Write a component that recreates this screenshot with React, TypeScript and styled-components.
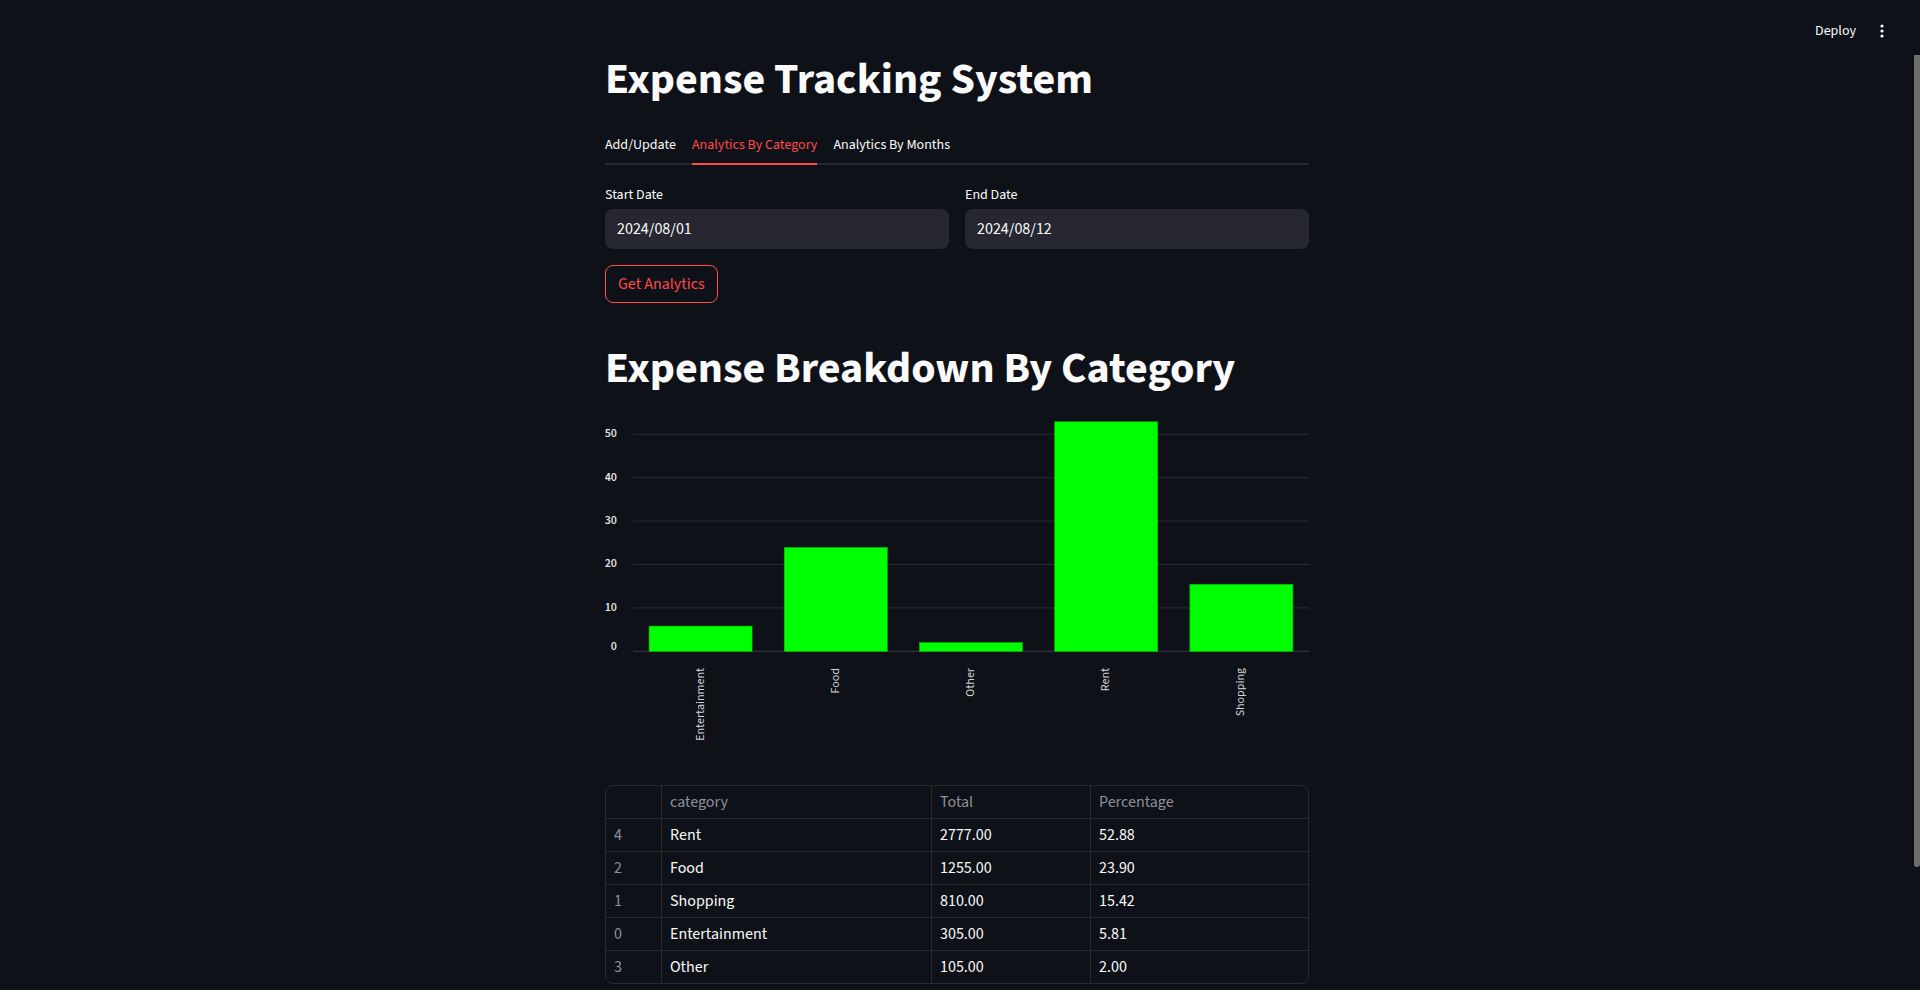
import styled, { createGlobalStyle } from "styled-components";

const GlobalStyle = createGlobalStyle`
    html, body {
        margin: 0;
        padding: 0;
        background: #0e1117;
        color: #fafafa;
        font-family: "Source Sans Pro", "Source Sans 3", Lato, "Liberation Sans", sans-serif;
        overflow: hidden;
    }
    * {
        box-sizing: border-box;
    }
`

const categories = [
    { name: 'Entertainment', value: 5.81 },
    { name: 'Food', value: 23.90 },
    { name: 'Other', value: 2.00 },
    { name: 'Rent', value: 52.88 },
    { name: 'Shopping', value: 15.42 },
];

const tableRows = [
    { index: 4, category: 'Rent', total: '2777.00', pct: '52.88' },
    { index: 2, category: 'Food', total: '1255.00', pct: '23.90' },
    { index: 1, category: 'Shopping', total: '810.00', pct: '15.42' },
    { index: 0, category: 'Entertainment', total: '305.00', pct: '5.81' },
    { index: 3, category: 'Other', total: '105.00', pct: '2.00' },
];

const AppShell = styled.div`
    display: flex;
    height: 100vh;
    width: 100vw;
`

const Main = styled.main`
    position: relative;
    flex: 1;
    overflow: hidden;
`

const ScrollTrack = styled.div`
    width: 6px;
    height: 100%;
`

const ScrollThumb = styled.div`
    margin-top: 55px;
    height: 812px;
    background: #6d6d6d;
    border-radius: 0 0 3px 3px;
`

const Header = styled.header`
    position: absolute;
    top: 0;
    left: 0;
    right: 0;
    height: 62px;
    display: flex;
    align-items: center;
    justify-content: flex-end;
    padding-right: 12px;
`

const DeployButton = styled.button`
    background: transparent;
    border: none;
    color: #fafafa;
    font-family: inherit;
    font-size: 14px;
    padding: 0 6px;
    height: 32px;
    cursor: pointer;
`

const MenuButton = styled.button`
    background: transparent;
    border: none;
    width: 40px;
    height: 32px;
    display: flex;
    align-items: center;
    justify-content: center;
    padding: 0;
    cursor: pointer;
`

const Content = styled.div`
    width: 704px;
    margin: 0 auto;
    padding-top: 54px;
    display: flex;
    flex-direction: column;
`

const Heading = styled.h1<{ $top?: number }>`
    margin: ${({ $top }) => $top ?? 0}px 0 0;
    font-size: 44px;
    font-weight: 700;
    line-height: 1.2;
    color: #fafafa;
`

const TabList = styled.div`
    margin-top: 16px;
    display: flex;
    gap: 16px;
    border-bottom: 2px solid #262730;
`

const Tab = styled.button<{ $active?: boolean }>`
    height: 42px;
    margin-bottom: -2px;
    padding: 4px 0 0;
    background: transparent;
    border: none;
    border-bottom: 2px solid ${({ $active }) => $active ? '#ff4b4b' : 'transparent'};
    color: ${({ $active }) => $active ? '#ff4b4b' : '#fafafa'};
    font-family: inherit;
    font-size: 14px;
    display: flex;
    align-items: center;
    cursor: pointer;
`

const DateRow = styled.div`
    margin-top: 17px;
    display: grid;
    grid-template-columns: 1fr 1fr;
    gap: 16px;
`

const Field = styled.div`
    display: flex;
    flex-direction: column;
    gap: 1px;
`

const FieldLabel = styled.label`
    font-size: 14px;
    line-height: 26px;
    color: #fafafa;
`

const DateInput = styled.div`
    height: 40px;
    border-radius: 8px;
    background: #262730;
    padding: 0 12px;
    display: flex;
    align-items: center;
    font-size: 16px;
    color: #fafafa;
`

const ActionButton = styled.button`
    align-self: flex-start;
    margin-top: 16px;
    height: 38px;
    padding: 0 12px;
    border: 1px solid #ff4b4b;
    border-radius: 8px;
    background: transparent;
    color: #ff4b4b;
    font-family: inherit;
    font-size: 16px;
    cursor: pointer;
`

const ChartBox = styled.div`
    margin-top: 14px;
    height: 350px;
`

const Table = styled.div`
    margin-top: 25px;
    border: 1px solid #272a31;
    border-radius: 8px;
    overflow: hidden;
`

const Row = styled.div`
    display: grid;
    grid-template-columns: 56px 270px 159px 1fr;
    height: 33px;
    border-bottom: 1px solid #272a31;

    &:last-child {
        height: 32px;
        border-bottom: none;
    }
`

const Cell = styled.div<{ $muted?: boolean }>`
    display: flex;
    align-items: center;
    padding-left: 8px;
    border-right: 1px solid #272a31;
    font-size: 16px;
    color: ${({ $muted }) => $muted ? '#8e9097' : '#fafafa'};

    &:last-child {
        border-right: none;
    }
`

const KebabIcon = () => (
    <svg width="4" height="14" viewBox="0 0 4 14">
        <circle cx="2" cy="2" r="1.6" fill="#fafafa" />
        <circle cx="2" cy="7" r="1.6" fill="#fafafa" />
        <circle cx="2" cy="12" r="1.6" fill="#fafafa" />
    </svg>
)

// plot geometry inside the chart svg
const PLOT_LEFT = 28;
const PLOT_RIGHT = 704;
const ZERO_Y = 241.3;
const PX_PER_UNIT = 4.34;
const BAR_WIDTH = 103;

const BarChart = () => {
    const band = (PLOT_RIGHT - PLOT_LEFT) / categories.length;
    const ticks = [0, 10, 20, 30, 40, 50];
    return <svg width="704" height="350" viewBox="0 0 704 350">
        {ticks.map(t => {
            const y = ZERO_Y - t * PX_PER_UNIT;
            return <g key={t}>
                <line x1={PLOT_LEFT} x2={PLOT_RIGHT} y1={y} y2={y} stroke={t === 0 ? '#3a3d46' : '#2b2e36'} strokeWidth="1" />
                <text
                    x="12"
                    y={t === 0 ? y - 1.5 : y}
                    textAnchor="end"
                    dominantBaseline={t === 0 ? 'alphabetic' : 'middle'}
                    fill="#e2e3e6"
                    fontSize="12"
                    fontWeight="600"
                >{t}</text>
            </g>
        })}
        {categories.map((c, i) => {
            const cx = PLOT_LEFT + band * i + band / 2;
            const h = c.value * PX_PER_UNIT;
            return <g key={c.name}>
                <rect x={cx - BAR_WIDTH / 2} y={ZERO_Y - h} width={BAR_WIDTH} height={h} fill="#00ff00" stroke="#00c400" strokeWidth="0.6" />
                <text
                    transform={`translate(${cx}, 258) rotate(-90)`}
                    textAnchor="end"
                    dominantBaseline="middle"
                    fill="#d4d5d9"
                    fontSize="12"
                >{c.name}</text>
            </g>
        })}
    </svg>
}

const App = () => {
    return <>
        <GlobalStyle />
        <AppShell>
            <Main>
                <Header>
                    <DeployButton>Deploy</DeployButton>
                    <MenuButton><KebabIcon /></MenuButton>
                </Header>
                <Content>
                    <Heading>Expense Tracking System</Heading>
                    <TabList>
                        <Tab>Add/Update</Tab>
                        <Tab $active>Analytics By Category</Tab>
                        <Tab>Analytics By Months</Tab>
                    </TabList>
                    <DateRow>
                        <Field>
                            <FieldLabel>Start Date</FieldLabel>
                            <DateInput>2024/08/01</DateInput>
                        </Field>
                        <Field>
                            <FieldLabel>End Date</FieldLabel>
                            <DateInput>2024/08/12</DateInput>
                        </Field>
                    </DateRow>
                    <ActionButton>Get Analytics</ActionButton>
                    <Heading $top={40}>Expense Breakdown By Category</Heading>
                    <ChartBox>
                        <BarChart />
                    </ChartBox>
                    <Table>
                        <Row>
                            <Cell $muted></Cell>
                            <Cell $muted>category</Cell>
                            <Cell $muted>Total</Cell>
                            <Cell $muted>Percentage</Cell>
                        </Row>
                        {tableRows.map(r => <Row key={r.index}>
                            <Cell $muted>{r.index}</Cell>
                            <Cell>{r.category}</Cell>
                            <Cell>{r.total}</Cell>
                            <Cell>{r.pct}</Cell>
                        </Row>)}
                    </Table>
                </Content>
            </Main>
            <ScrollTrack>
                <ScrollThumb />
            </ScrollTrack>
        </AppShell>
    </>
}

export default App;
